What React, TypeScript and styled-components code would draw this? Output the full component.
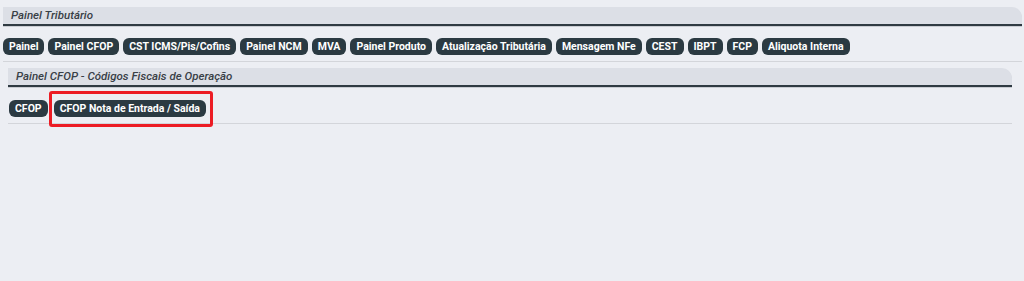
import styled, { createGlobalStyle } from "styled-components";

const GlobalStyle = createGlobalStyle`
    html, body {
        margin: 0;
        padding: 0;
        background-color: #eceef3;
        font-family: Roboto, "Liberation Sans", Arial, sans-serif;
    }
`;

const PageWrapper = styled.div`
    min-height: 281px;
    padding: 7px 2px 0 3px;
    box-sizing: border-box;
`;

const PanelTitle = styled.div`
    background-color: #dcdfe6;
    border-bottom: 2px solid #2f3a42;
    border-top-right-radius: 10px;
    height: 17px;
    line-height: 17px;
    padding-left: 8px;
    font-style: italic;
    font-weight: 500;
    font-size: 11.5px;
    color: #394047;
    box-shadow: 0 1px 0 #c9ccd2;
`;

const ButtonRow = styled.div`
    display: flex;
    flex-wrap: wrap;
    gap: 4px;
    padding: 12px 0 6px;
    border-bottom: 1px solid #d3d5da;
`;

const TabButton = styled.button`
    font-family: Roboto, "Liberation Sans", Arial, sans-serif;
    font-weight: bold;
    font-size: 10.5px;
    color: #ffffff;
    background-color: #2b3a42;
    border: none;
    border-radius: 6px;
    height: 17px;
    padding: 0 6px;
    line-height: 17px;
    cursor: pointer;
`;

const SubPanel = styled.div`
    margin: 6px 10px 0 5px;
`;

const SubRow = styled.div`
    display: flex;
    align-items: center;
    gap: 6px;
    padding: 13px 0 6px 1px;
    border-bottom: 1px solid #d3d5da;
`;

// red marker drawn over the selected button
const Highlight = styled.div`
    position: relative;
    display: flex;

    &::after {
        content: "";
        position: absolute;
        top: -9px;
        bottom: -10px;
        left: -5px;
        right: -7px;
        border: 3px solid #ec1c24;
        border-radius: 3px;
        pointer-events: none;
    }
`;

const mainTabs = [
    "Painel",
    "Painel CFOP",
    "CST ICMS/Pis/Cofins",
    "Painel NCM",
    "MVA",
    "Painel Produto",
    "Atualização Tributária",
    "Mensagem NFe",
    "CEST",
    "IBPT",
    "FCP",
    "Aliquota Interna",
];

export default function App() {
    return (
        <PageWrapper>
            <GlobalStyle />
            <PanelTitle>Painel Tributário</PanelTitle>

            {/*main tabs*/}
            <ButtonRow>
                {mainTabs.map((t) => (
                    <TabButton key={t}>{t}</TabButton>
                ))}
            </ButtonRow>

            <SubPanel>
                <PanelTitle>Painel CFOP - Códigos Fiscais de Operação</PanelTitle>
                <SubRow>
                    <TabButton>CFOP</TabButton>
                    <Highlight>
                        <TabButton>CFOP Nota de Entrada / Saída</TabButton>
                    </Highlight>
                </SubRow>
            </SubPanel>
        </PageWrapper>
    );
}
